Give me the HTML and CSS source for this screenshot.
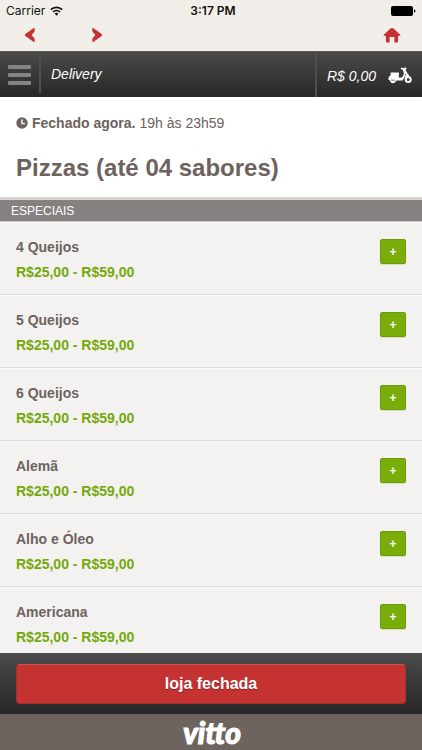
FILE: index.html
```html
<!DOCTYPE html>
<html lang="pt-BR">
<head>
<meta charset="utf-8">
<meta name="viewport" content="width=device-width, initial-scale=1">
<title>Vitto Delivery</title>
<link rel="stylesheet" href="styles.css">
</head>
<body>
<div class="status">
  <span class="carrier">Carrier
    <svg width="13" height="10" viewBox="0 0 13 10" aria-hidden="true"><g fill="none" stroke="#111" stroke-width="1.7"><path d="M.8 3.6a8.2 8.2 0 0 1 11.4 0"/><path d="M3 6a5.1 5.1 0 0 1 7 0"/></g><path d="M4.6 7.6a2.8 2.8 0 0 1 3.8 0L6.500 9.700z" fill="#111"/></svg>
  </span>
  <span class="time">3:17 PM</span>
  <span class="battery"><svg width="26" height="10" viewBox="0 0 26 10" aria-hidden="true"><rect x="1" width="22" height="10" rx="2"/><path d="M24 3.300q1.500.4 1.500 1.700T24 6.700z"/></svg></span>
</div>
<nav class="browser">
  <a href="#" aria-label="Voltar"><svg width="10" height="14" viewBox="0 0 10 14"><path d="M9.600 0v3.600L6.600 7l3 3.400V14H8.800L0 7.700V6.300L8.800 0z"/></svg></a>
  <a href="#" aria-label="Avançar"><svg width="10" height="14" viewBox="0 0 10 14"><path d="M.4 0v3.600L3.400 7l-3 3.400V14h.8L10 7.700V6.300L1.200 0z"/></svg></a>
  <a class="home" href="#" aria-label="Início"><svg width="18" height="15" viewBox="0 0 18 15"><path d="M9 0q.8 0 1.500.6L17.500 7l-.3.800h-2.100v6q0 .7-.7.700h-3V9H6.600v5.500h-3q-.7 0-.7-.7v-6H.8L.5 7l7-6.400Q8.200 0 9 0z"/></svg></a>
</nav>
<header class="bar">
  <button class="menu" aria-label="Menu"><span></span><span></span><span></span></button>
  <span class="place">Delivery</span>
  <a class="cart" href="#">R$ 0,00
    <svg width="24" height="17" viewBox="0 0 24 17" aria-hidden="true"><path d="M3 5.500H10.200q1 0 .9 1L10.600 10.500h3.200q1.800-1.400 2.100-4.200L14.900 3l-2.200-1 .7-1.500 2.400.8L17.700.2l.9 1.300-1 1.500 2.800 5.200-1.300.7-1.700-2.400q-.6 4.600-3 7.100H8.300q-.8 2.600-3.300 2.600T1.800 13.200L.2 12.400Q.3 9.300 3 7.700 1.700 6.200 3 5.500z" fill="#fff"/><circle cx="20.200" cy="12.400" r="2.500" fill="none" stroke="#fff" stroke-width="2"/><path d="M16.800 10.200q1.600-2.400 4.200-1.700" fill="none" stroke="#fff" stroke-width="1.500"/><path d="M3.200 13.200h3.600" stroke="#444" stroke-width=".8"/></svg>
  </a>
</header>
<main>
  <section class="intro">
    <p class="hours"><svg width="12" height="12" viewBox="0 0 12 12" aria-hidden="true"><circle cx="6" cy="6" r="5.700" fill="#6d625d"/><path d="M6 2.500V6.600h3" fill="none" stroke="#fff" stroke-width="1.400"/></svg><strong>Fechado agora.</strong> 19h às 23h59</p>
    <h1>Pizzas (até 04 sabores)</h1>
  </section>
  <h2>ESPECIAIS</h2>
  <ul>
    <li><div><h3>4 Queijos</h3><p>R$25,00 - R$59,00</p></div><button aria-label="Adicionar 4 Queijos">+</button></li>
    <li><div><h3>5 Queijos</h3><p>R$25,00 - R$59,00</p></div><button aria-label="Adicionar 5 Queijos">+</button></li>
    <li><div><h3>6 Queijos</h3><p>R$25,00 - R$59,00</p></div><button aria-label="Adicionar 6 Queijos">+</button></li>
    <li><div><h3>Alemã</h3><p>R$25,00 - R$59,00</p></div><button aria-label="Adicionar Alemã">+</button></li>
    <li><div><h3>Alho e Óleo</h3><p>R$25,00 - R$59,00</p></div><button aria-label="Adicionar Alho e Óleo">+</button></li>
    <li><div><h3>Americana</h3><p>R$25,00 - R$59,00</p></div><button aria-label="Adicionar Americana">+</button></li>
  </ul>
</main>
<div class="checkout"><button>loja fechada</button></div>
<footer>vitto</footer>
</body>
</html>
```
FILE: styles.css
```css
* { box-sizing: border-box; margin: 0; padding: 0; }
body {
  display: flex;
  flex-direction: column;
  height: 100vh;
  background: #f4f2f1;
  color: #6d625d;
  font: 14px/20px "Liberation Sans", Arial, sans-serif;
}
svg { display: block; }
button { border: 0; font-family: inherit; cursor: pointer; }
a { text-decoration: none; }

.status {
  display: grid;
  grid-template-columns: 1fr auto 1fr;
  align-items: center;
  padding: 0 6px;
  background: #f2eee9;
  color: #111;
  font: 12px/22px Inter, sans-serif;
}
.carrier { display: flex; align-items: center; gap: 5px; }
.time { padding-left: 4px; font-weight: 600; }
.battery { justify-self: end; }

.browser {
  display: flex;
  align-items: center;
  gap: 57px;
  padding: 0 21px 3px 25px;
  height: 29px;
  background: #f2eee9;
}
.browser svg { fill: #c63232; }
.home { margin-left: auto; }

.bar {
  display: flex;
  align-items: stretch;
  height: 46px;
  background: linear-gradient(#4b4a4a, #272727);
  border-top: 1px solid #5b5756;
  color: #fff;
  font-style: italic;
}
.menu {
  display: flex;
  flex-direction: column;
  justify-content: center;
  gap: 4px;
  margin: 4px 0;
  padding: 0 8px;
  width: 41px;
  border-right: 2px solid #544d4a;
  background: none;
}
.menu span { width: 23px; height: 4px; border-radius: 1px; background: #858484; }
.place { padding: 12px 10px; }
.cart {
  display: flex;
  align-items: center;
  gap: 12px;
  margin-left: auto;
  padding: 2px 10px 0;
  border-left: 2px solid #544d4a;
  color: #fff;
}

main { flex: 1; min-height: 0; overflow: hidden; }
.intro {
  padding: 16px 16px 14px;
  background: #fff;
  border-bottom: 3px solid #d9d3cd;
}
.hours { display: flex; align-items: center; gap: 4px; }
h1 { padding-top: 20px; font-size: 24px; line-height: 30px; }
h2 {
  padding: 1px 11px 0;
  background: #858180;
  border-bottom: 1px solid #d0cdcb;
  color: #fff;
  font-size: 12px;
  font-weight: 400;
  line-height: 20px;
}
ul { list-style: none; }
li {
  display: flex;
  justify-content: space-between;
  align-items: flex-start;
  padding: 14px 16px 12px;
  height: 73px;
  border-top: 1px solid #faf9f8;
  border-bottom: 1px solid #e0dcd9;
}
h3 { font-size: 14px; line-height: 20px; }
li p { padding-top: 5px; color: #74a90c; font-weight: 700; }
li button {
  margin-top: 2px;
  width: 26px;
  height: 25px;
  border: 1px solid #6d9b0d;
  border-radius: 2px;
  background: #7aac0a;
  box-shadow: 0 1px 1px #d4dfbb;
  color: #fff;
  font-size: 12px;
  font-weight: 700;
  line-height: 22px;
}
.checkout {
  padding: 11px 16px 10px;
  background: linear-gradient(#4b4b4b, #272727);
}
.checkout button {
  display: block;
  width: 100%;
  border: 1px solid #a82d2d;
  border-top-color: #cf5050;
  border-radius: 4px;
  background: #c53232;
  color: #fff;
  font-size: 16px;
  font-weight: 700;
  line-height: 38px;
  text-shadow: 0 1px 1px #8c2222;
}
footer {
  padding-left: 2px;
  height: 36px;
  background: #6d645f;
  color: #fff;
  font: italic 900 30px/36px Lato, sans-serif;
  text-align: center;
  -webkit-text-stroke: 1px #fff;
}
```
